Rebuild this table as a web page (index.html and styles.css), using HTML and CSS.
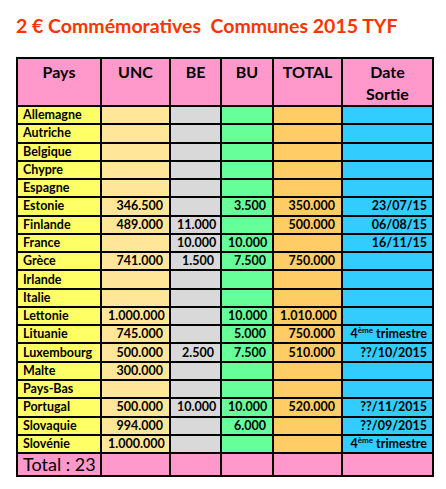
FILE: index.html
```html
<!DOCTYPE html>
<html lang="fr">
<head>
  <meta charset="UTF-8" />
  <title>2 € Commémoratives Communes 2015</title>
  <link rel="stylesheet" href="styles.css">
</head>
<body>
  <main class="page">
    <h1 class="title">2 € Commémoratives&nbsp; Communes 2015 TYF</h1>

    <table class="coins">
      <colgroup>
        <col class="c-pays">
        <col class="c-unc">
        <col class="c-be">
        <col class="c-bu">
        <col class="c-total">
        <col class="c-date">
      </colgroup>
      <thead>
        <tr>
          <th>Pays</th>
          <th>UNC</th>
          <th>BE</th>
          <th>BU</th>
          <th>TOTAL</th>
          <th>Date<br>Sortie</th>
        </tr>
      </thead>
      <tbody>
        <tr><td>Allemagne</td><td></td><td></td><td></td><td></td><td></td></tr>
        <tr><td>Autriche</td><td></td><td></td><td></td><td></td><td></td></tr>
        <tr><td>Belgique</td><td></td><td></td><td></td><td></td><td></td></tr>
        <tr><td>Chypre</td><td></td><td></td><td></td><td></td><td></td></tr>
        <tr><td>Espagne</td><td></td><td></td><td></td><td></td><td></td></tr>
        <tr><td>Estonie</td><td>346.500</td><td></td><td>3.500</td><td>350.000</td><td>23/07/15</td></tr>
        <tr><td>Finlande</td><td>489.000</td><td>11.000</td><td></td><td>500.000</td><td>06/08/15</td></tr>
        <tr><td>France</td><td></td><td>10.000</td><td>10.000</td><td></td><td>16/11/15</td></tr>
        <tr><td>Grèce</td><td>741.000</td><td>1.500</td><td>7.500</td><td>750.000</td><td></td></tr>
        <tr><td>Irlande</td><td></td><td></td><td></td><td></td><td></td></tr>
        <tr><td>Italie</td><td></td><td></td><td></td><td></td><td></td></tr>
        <tr><td>Lettonie</td><td>1.000.000</td><td></td><td>10.000</td><td>1.010.000</td><td></td></tr>
        <tr><td>Lituanie</td><td>745.000</td><td></td><td>5.000</td><td>750.000</td><td>4<sup>ème</sup> trimestre</td></tr>
        <tr><td>Luxembourg</td><td>500.000</td><td>2.500</td><td>7.500</td><td>510.000</td><td>??/10/2015</td></tr>
        <tr><td>Malte</td><td>300.000</td><td></td><td></td><td></td><td></td></tr>
        <tr><td>Pays-Bas</td><td></td><td></td><td></td><td></td><td></td></tr>
        <tr><td>Portugal</td><td>500.000</td><td>10.000</td><td>10.000</td><td>520.000</td><td>??/11/2015</td></tr>
        <tr><td>Slovaquie</td><td>994.000</td><td></td><td>6.000</td><td></td><td>??/09/2015</td></tr>
        <tr><td>Slovénie</td><td>1.000.000</td><td></td><td></td><td></td><td>4<sup>ème</sup> trimestre</td></tr>
      </tbody>
      <tfoot>
        <tr>
          <td>Total : 23</td><td></td><td></td><td></td><td></td><td></td>
        </tr>
      </tfoot>
    </table>
  </main>
</body>
</html>
```

FILE: styles.css
```css
body {
  margin: 0;
  background: #fff;
  font-family: Lato, "Open Sans", sans-serif;
  color: #000;
}

.page {
  padding: 14px 12px 0 16px;
}

.title {
  margin: 0 0 19px;
  font-size: 19.5px;
  line-height: 24px;
  font-weight: bold;
  color: #ff3300;
}

.coins {
  width: 418px;
  table-layout: fixed;
  border-collapse: collapse;
  border: 2px solid #000;
}

.c-pays { width: 84px; }
.c-unc { width: 69px; }
.c-be { width: 51px; }
.c-bu { width: 52px; }
.c-total { width: 69px; }
.c-date { width: 91px; }

th, td {
  border: 2px solid #000;
  padding: 0 6px;
  white-space: nowrap;
}

thead th {
  height: 44px;
  background: #ff99cc;
  font-size: 16px;
  line-height: 22px;
  font-weight: bold;
  vertical-align: top;
  text-align: center;
  padding-top: 2px;
  padding-bottom: 0;
}

tbody td {
  height: 16.27px;
  font-size: 12.5px;
  line-height: 14px;
  font-weight: bold;
  text-align: right;
  padding-top: 0;
  padding-bottom: 0;
  overflow: hidden;
}

tbody td:nth-child(1) { background: #ffff66; text-align: left; padding-left: 5px; }
tbody td:nth-child(2) { background: #ffe699; }
tbody td:nth-child(3) { background: #d9d9d9; }
tbody td:nth-child(4) { background: #66ff99; }
tbody td:nth-child(5) { background: #ffcc66; }
tbody td:nth-child(6) { background: #33ccff; padding-left: 1px; padding-right: 5px; }

sup {
  font-size: 8px;
  line-height: 0;
  vertical-align: 5px;
}

tfoot td {
  height: 21px;
  background: #ff99cc;
  font-size: 18px;
  line-height: 21px;
  font-weight: normal;
  padding-left: 5px;
  padding-right: 0;
}
```
